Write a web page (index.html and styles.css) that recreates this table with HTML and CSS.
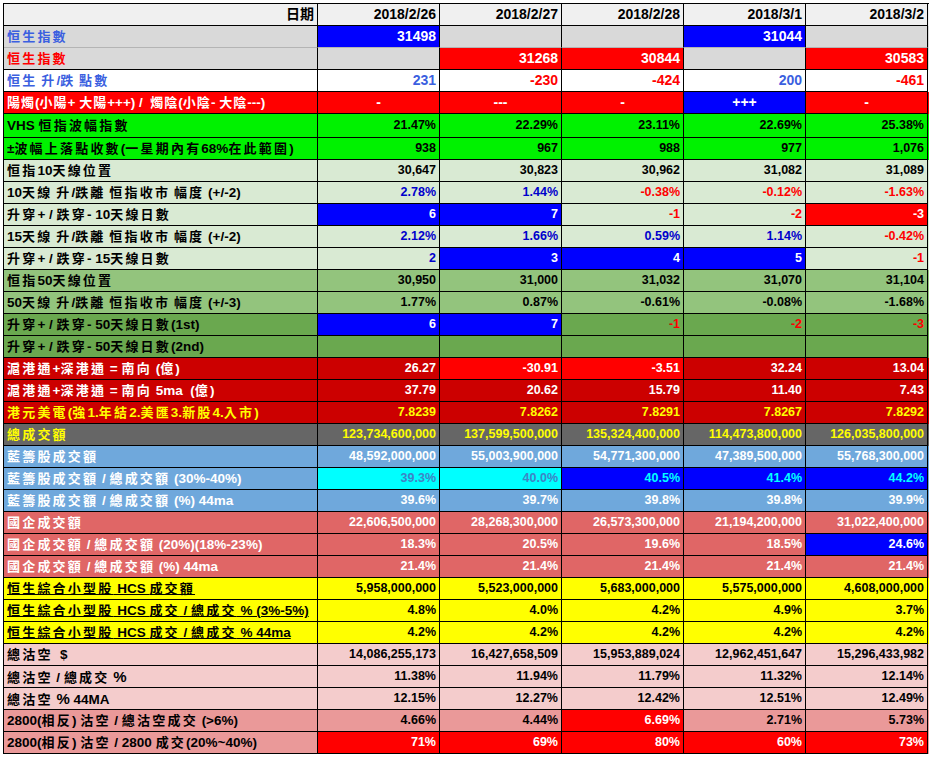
FILE: index.html
```html
<!DOCTYPE html>
<html lang="zh-Hant">
<head>
<meta charset="utf-8">
<title>恒生指數</title>
<link rel="stylesheet" href="styles.css">
</head>
<body>
<div class="sheet">
  <div class="tbl">
    <div class="row hdr">
      <div class="l rt"><span class="h">日期</span></div>
      <div>2018/2/26</div><div>2018/2/27</div><div>2018/2/28</div><div>2018/3/1</div><div>2018/3/2</div>
    </div>
    <div class="row gray big soft">
      <div class="l tb"><span class="c">恒生指數</span></div>
      <div class="cb">31498</div><div></div><div></div><div class="cb">31044</div><div></div>
    </div>
    <div class="row gray big">
      <div class="l tr"><span class="c">恒生指數</span></div>
      <div></div><div class="cr">31268</div><div class="cr">30844</div><div></div><div class="cr">30583</div>
    </div>
    <div class="row white big">
      <div class="l tb"><span class="c">恒生</span> <span class="c">升</span>/<span class="c">跌</span> <span class="c">點數</span></div>
      <div class="tb">231</div><div class="tr">-230</div><div class="tr">-424</div><div class="tb">200</div><div class="tr">-461</div>
    </div>
    <div class="row red big ctr">
      <div class="l tight"><span class="c">陽燭</span>(<span class="c">小陽</span>+ <span class="c">大陽</span>+++) /&nbsp; <span class="c">燭陰</span>(<span class="c">小陰</span>- <span class="c">大陰</span>---)</div>
      <div>-</div><div>---</div><div>-</div><div class="cb">+++</div><div>-</div>
    </div>
    <div class="row grn tall">
      <div class="l">VHS <span class="c">恒指波幅指數</span></div>
      <div>21.47%</div><div>22.29%</div><div>23.11%</div><div>22.69%</div><div>25.38%</div>
    </div>
    <div class="row grn">
      <div class="l">±<span class="c">波幅上落點收數</span>(<span class="c">一星期內有</span>68%<span class="c">在此範圍</span>)</div>
      <div>938</div><div>967</div><div>988</div><div>977</div><div>1,076</div>
    </div>
    <div class="row lg">
      <div class="l"><span class="c">恒指</span>10<span class="c">天線位置</span></div>
      <div>30,647</div><div>30,823</div><div>30,962</div><div>31,082</div><div>31,089</div>
    </div>
    <div class="row lg">
      <div class="l">10<span class="c">天線</span> <span class="c">升</span>/<span class="c">跌離</span> <span class="c">恒指收市</span> <span class="c">幅度</span> (+/-2)</div>
      <div class="tdb">2.78%</div><div class="tdb">1.44%</div><div class="tr">-0.38%</div><div class="tr">-0.12%</div><div class="tr">-1.63%</div>
    </div>
    <div class="row lg">
      <div class="l"><span class="c">升穿</span>+ / <span class="c">跌穿</span>- 10<span class="c">天線日數</span></div>
      <div class="cb">6</div><div class="cb">7</div><div class="tr">-1</div><div class="tr">-2</div><div class="cr">-3</div>
    </div>
    <div class="row lg">
      <div class="l">15<span class="c">天線</span> <span class="c">升</span>/<span class="c">跌離</span> <span class="c">恒指收市</span> <span class="c">幅度</span> (+/-2)</div>
      <div class="tdb">2.12%</div><div class="tdb">1.66%</div><div class="tdb">0.59%</div><div class="tdb">1.14%</div><div class="tr">-0.42%</div>
    </div>
    <div class="row lg">
      <div class="l"><span class="c">升穿</span>+ / <span class="c">跌穿</span>- 15<span class="c">天線日數</span></div>
      <div class="tdb">2</div><div class="cb">3</div><div class="cb">4</div><div class="cb">5</div><div class="tr">-1</div>
    </div>
    <div class="row mg">
      <div class="l"><span class="c">恒指</span>50<span class="c">天線位置</span></div>
      <div>30,950</div><div>31,000</div><div>31,032</div><div>31,070</div><div>31,104</div>
    </div>
    <div class="row mg">
      <div class="l">50<span class="c">天線</span> <span class="c">升</span>/<span class="c">跌離</span> <span class="c">恒指收市</span> <span class="c">幅度</span> (+/-3)</div>
      <div>1.77%</div><div>0.87%</div><div>-0.61%</div><div>-0.08%</div><div>-1.68%</div>
    </div>
    <div class="row dg">
      <div class="l"><span class="c">升穿</span>+ / <span class="c">跌穿</span>- 50<span class="c">天線日數</span>(1st)</div>
      <div class="cb">6</div><div class="cb">7</div><div class="tr">-1</div><div class="tr">-2</div><div class="tr">-3</div>
    </div>
    <div class="row dg">
      <div class="l"><span class="c">升穿</span>+ / <span class="c">跌穿</span>- 50<span class="c">天線日數</span>(2nd)</div>
      <div></div><div></div><div></div><div></div><div></div>
    </div>
    <div class="row dr">
      <div class="l"><span class="c">滬港通</span>+<span class="c">深港通</span> = <span class="c">南向</span> (<span class="c">億</span>)</div>
      <div>26.27</div><div class="brt">-30.91</div><div class="brt">-3.51</div><div>32.24</div><div>13.04</div>
    </div>
    <div class="row dr">
      <div class="l"><span class="c">滬港通</span>+<span class="c">深港通</span> = <span class="c">南向</span> 5ma&nbsp; (<span class="c">億</span>)</div>
      <div>37.79</div><div>20.62</div><div>15.79</div><div>11.40</div><div>7.43</div>
    </div>
    <div class="row dr yel">
      <div class="l"><span class="c">港元美電</span>(<span class="c">強</span>1.<span class="c">年結</span>2.<span class="c">美匯</span>3.<span class="c">新股</span>4.<span class="c">入市</span>)</div>
      <div>7.8239</div><div>7.8262</div><div>7.8291</div><div>7.8267</div><div>7.8292</div>
    </div>
    <div class="row dgy">
      <div class="l"><span class="c">總成交額</span></div>
      <div>123,734,600,000</div><div>137,599,500,000</div><div>135,324,400,000</div><div>114,473,800,000</div><div>126,035,800,000</div>
    </div>
    <div class="row lbl">
      <div class="l"><span class="c">藍籌股成交額</span></div>
      <div>48,592,000,000</div><div>55,003,900,000</div><div>54,771,300,000</div><div>47,389,500,000</div><div>55,768,300,000</div>
    </div>
    <div class="row lbl">
      <div class="l"><span class="c">藍籌股成交額</span> / <span class="c">總成交額</span> (30%-40%)</div>
      <div class="cy">39.3%</div><div class="cy">40.0%</div><div class="bc">40.5%</div><div class="bc">41.4%</div><div class="bc">44.2%</div>
    </div>
    <div class="row lbl">
      <div class="l"><span class="c">藍籌股成交額</span> / <span class="c">總成交額</span> (%) 44ma</div>
      <div>39.6%</div><div>39.7%</div><div>39.8%</div><div>39.8%</div><div>39.9%</div>
    </div>
    <div class="row lrd">
      <div class="l"><span class="c">國企成交額</span></div>
      <div>22,606,500,000</div><div>28,268,300,000</div><div>26,573,300,000</div><div>21,194,200,000</div><div>31,022,400,000</div>
    </div>
    <div class="row lrd">
      <div class="l"><span class="c">國企成交額</span> / <span class="c">總成交額</span> (20%)(18%-23%)</div>
      <div>18.3%</div><div>20.5%</div><div>19.6%</div><div>18.5%</div><div class="cb">24.6%</div>
    </div>
    <div class="row lrd">
      <div class="l"><span class="c">國企成交額</span> / <span class="c">總成交額</span> (%) 44ma</div>
      <div>21.4%</div><div>21.4%</div><div>21.4%</div><div>21.4%</div><div>21.4%</div>
    </div>
    <div class="row yl">
      <div class="l ul"><span class="c">恒生綜合小型股</span> HCS <span class="c">成交額</span></div>
      <div>5,958,000,000</div><div>5,523,000,000</div><div>5,683,000,000</div><div>5,575,000,000</div><div>4,608,000,000</div>
    </div>
    <div class="row yl">
      <div class="l ul"><span class="c">恒生綜合小型股</span> HCS <span class="c">成交</span> / <span class="c">總成交</span> % (3%-5%)</div>
      <div>4.8%</div><div>4.0%</div><div>4.2%</div><div>4.9%</div><div>3.7%</div>
    </div>
    <div class="row yl">
      <div class="l ul"><span class="c">恒生綜合小型股</span> HCS <span class="c">成交</span> / <span class="c">總成交</span> % 44ma</div>
      <div>4.2%</div><div>4.2%</div><div>4.2%</div><div>4.2%</div><div>4.2%</div>
    </div>
    <div class="row pk">
      <div class="l"><span class="c">總沽空</span>&nbsp; $</div>
      <div>14,086,255,173</div><div>16,427,658,509</div><div>15,953,889,024</div><div>12,962,451,647</div><div>15,296,433,982</div>
    </div>
    <div class="row pk">
      <div class="l"><span class="c">總沽空</span> / <span class="c">總成交</span> <span class="pc">%</span></div>
      <div>11.38%</div><div>11.94%</div><div>11.79%</div><div>11.32%</div><div>12.14%</div>
    </div>
    <div class="row pk">
      <div class="l"><span class="c">總沽空</span> <span class="pc">%</span> 44MA</div>
      <div>12.15%</div><div>12.27%</div><div>12.42%</div><div>12.51%</div><div>12.49%</div>
    </div>
    <div class="row pk2">
      <div class="l">2800(<span class="c">相反</span>) <span class="c">沽空</span> / <span class="c">總沽空成交</span> (&gt;6%)</div>
      <div>4.66%</div><div>4.44%</div><div class="cr">6.69%</div><div>2.71%</div><div>5.73%</div>
    </div>
    <div class="row pk2">
      <div class="l">2800(<span class="c">相反</span>) <span class="c">沽空</span> / 2800 <span class="c">成交</span>(20%~40%)</div>
      <div class="cr">71%</div><div class="cr">69%</div><div class="cr">80%</div><div class="cr">60%</div><div class="cr">73%</div>
    </div>
  </div>
</div>
</body>
</html>
```

FILE: styles.css
```css
html, body {
  margin: 0;
  padding: 0;
  background: #ffffff;
}

body {
  font-family: "Liberation Sans", Arial, "Noto Sans CJK TC", sans-serif;
  font-weight: bold;
  color: #000000;
}

.sheet {
  padding: 3px 0 0 3px;
}

.tbl {
  width: 925px;
  border-left: 1px solid #000;
  border-top: 1px solid #000;
}

.row {
  display: grid;
  grid-template-columns: 314px repeat(5, 122px);
  grid-template-rows: 22px;
  height: 22px;
}

.row.tall {
  grid-template-rows: 24px;
  height: 24px;
}

.row > div {
  box-sizing: border-box;
  border-right: 1px solid #000;
  border-bottom: 1px solid #000;
  padding: 0 3px 0 3px;
  font-size: 12.5px;
  line-height: 21px;
  text-align: right;
  white-space: nowrap;
  overflow: hidden;
}

.row.tall > div {
  line-height: 23px;
}

.row > .l {
  text-align: left;
  padding-left: 3px;
  font-size: 13.5px;
}

.row > .l.rt {
  text-align: right;
}

.c {
  font-family: "Noto Sans CJK TC", "Noto Sans CJK SC", sans-serif;
  font-size: 13px;
  letter-spacing: 2.2px;
  line-height: 1;
}

.tight .c {
  letter-spacing: 1px;
}

.h {
  font-family: "Noto Sans CJK TC", sans-serif;
  font-size: 14px;
  line-height: 1;
}

.pc {
  font-size: 15px;
}

.ul {
  text-decoration: underline;
  text-underline-offset: 1px;
}

.big > div {
  font-size: 14px;
}

.ctr > div {
  text-align: center;
}

/* row backgrounds */
.hdr { background: #f0f0f0; }
.hdr > div { font-size: 14px; }
.gray { background: #d9d9d9; }
.soft > div { border-bottom-color: #b4b4b4; }
.white { background: #ffffff; }
.red { background: #ff0000; color: #ffffff; }
.grn { background: #00f200; }
.lg { background: #d9ead3; }
.mg { background: #93c47d; }
.dg { background: #6aa84f; }
.dr { background: #cc0000; color: #ffffff; }
.dr.yel { color: #ffff00; }
.dgy { background: #666666; color: #ffff00; }
.lbl { background: #6fa8dc; color: #ffffff; }
.lrd { background: #e06666; color: #ffffff; }
.yl { background: #ffff00; }
.pk { background: #f4cccc; }
.pk2 { background: #ea9999; }

/* cell overrides */
.cb { background: #0000ff; color: #ffffff; }
.cr { background: #ff0000; color: #ffffff; }
.brt { background: #ff0000; }
.tb { color: #3b5fe0; }
.tdb { color: #0000cc; }
.tr { color: #ff0000; }
.cy { background: #00ffff; color: #3d85c6; }
.bc { background: #0000ff; color: #00ffff; }
.row > .l.tb { color: #3b5fe0; }
.row > .l.tr { color: #ff0000; }
```
